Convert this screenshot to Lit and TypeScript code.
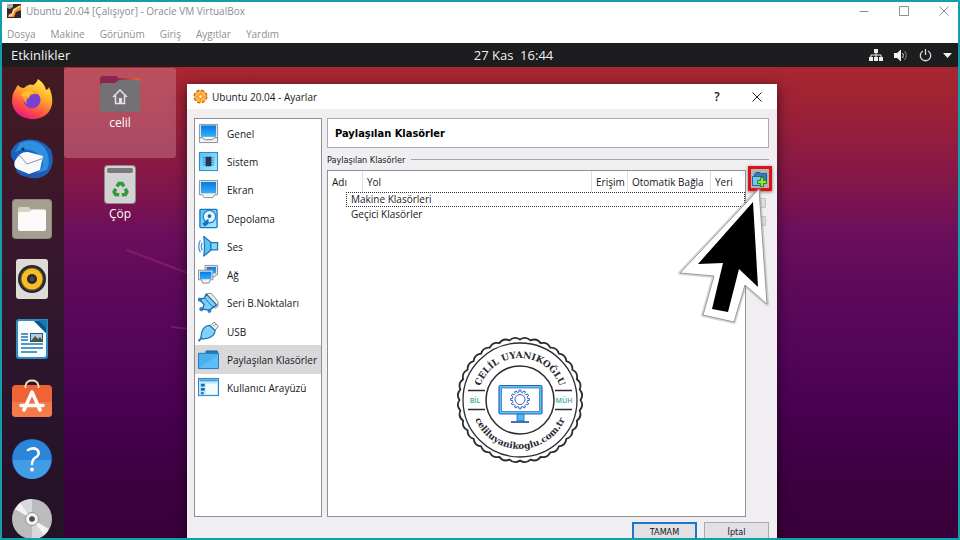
import { LitElement, html, svg, css } from "lit";
import { customElement } from "lit/decorators.js";
import { classMap } from "lit/directives/class-map.js";

const defs = svg`<defs>
  <linearGradient id="b" x1="0" y1="0" x2="0" y2="1"><stop offset="0" stop-color="#0a78e0"/><stop offset="1" stop-color="#35b0fa"/></linearGradient>
  <linearGradient id="c" x1="0" y1="0" x2="1" y2="1"><stop offset="0" stop-color="#4fc0f6"/><stop offset="1" stop-color="#a9ecff"/></linearGradient>
</defs>`;

const icon = (body: unknown) => html`<svg class="nav-icon" viewBox="0 0 22 22" aria-hidden="true">${defs}${body}</svg>`;

const navItems = [
  { label: "Genel", art: svg`<path d="M1.5 1.5H20.5V20.5H1.5Z" fill="#f4f4f4" stroke="#8a8d94"/><rect x="3" y="2.500" width="16" height="12" fill="url(#b)"/><path d="M1.500 15.500H5L7 17.500H15L17 15.500H20.500" fill="none" stroke="#777b82"/>` },
  { label: "Sistem", art: svg`<rect x="1.500" y="1.500" width="19" height="19" fill="url(#c)" stroke="#2c80c0"/><path d="M5 7h12M5 9.500h12M5 12h12M5 14.500h12" stroke="#2f8fcf"/><rect x="8" y="6" width="6" height="10" fill="#26354a"/>` },
  { label: "Ekran", art: svg`<path d="M1.500 1.500H20.500V16.500H17.500L15.500 19.500H6.500L4.500 16.500H1.500Z" fill="#f4f4f4" stroke="#858991"/><rect x="3" y="3" width="16" height="12" fill="url(#b)"/>` },
  { label: "Depolama", art: svg`<rect x="2" y="1.500" width="18" height="19" rx="1" fill="url(#c)" stroke="#1f78bd" stroke-width="1.400"/><circle cx="12" cy="9" r="6.500" fill="#e4f6ff" stroke="#2381c4" stroke-width="1.300"/><circle cx="12" cy="8.500" r="2" fill="#1768ad"/><path d="M11 11 4.500 16.500l2.500 3q4-2 4-5Z" fill="#1d72ba"/>` },
  { label: "Ses", art: svg`<path d="M6 .500 13.500 6.500v8.500L6 21Q7.500 11 6 .500Z" fill="#5cc2f6" stroke="#1f74b8" stroke-width="1.300" stroke-linejoin="round"/><path d="M13.500 7h7v7.500h-7Z" fill="#86d6fa" stroke="#1f74b8" stroke-width="1.300"/><path d="M4.500 7Q2.500 11 4.500 15M2.500 4.500Q-1 11 2.500 17" fill="none" stroke="#3c93d2" stroke-width="1.300"/>` },
  { label: "Ağ", art: svg`<path d="M7.500 1.500h13v10h-2l-1 2h-8l-2-2Z" fill="#f2f2f2" stroke="#878b92"/><rect x="9" y="3" width="10" height="7" fill="url(#b)"/><path d="M.500 6.500h15v10h-2.500l-1.500 3.500H5l-1.500-3.500h-3Z" fill="#f2f2f2" stroke="#858991"/><rect x="2" y="8" width="12" height="8" fill="url(#b)"/>` },
  { label: "Seri B.Noktaları", art: svg`<path d="M10 1.500h4L21 10v5l-3 2L8 6Z" fill="#eee" stroke="#888"/><path d="M8.500 2 19.500 13.500l-7.500 5.500-7.500-1L6.500 13 .800 7.500l6-1Z" fill="#7fd0f8" stroke="#1d6cac" stroke-width="1.400" stroke-linejoin="round"/><path d="M7 6.500 15.500 15.500" fill="none" stroke="#1d6cac"/><g fill="#2d8ad0" stroke="#1a5f9c" stroke-width=".6"><circle cx="2" cy="8" r="1.800"/><circle cx="3.500" cy="18" r="1.800"/><circle cx="12" cy="20" r="1.600"/></g>` },
  { label: "USB", art: svg`<path d="m13 5 4-4 4.500 4.500-4 4.500Z" fill="#f2f2f2" stroke="#7f838a"/><path d="M16 4.500l1 1M18 3l1 1" stroke="#555"/><path d="M12 4.500 18 10Q17 16 10.500 18L5 19 3 17 4 11.500Q6 5 12 4.500Z" fill="#7fd3f9" stroke="#2277ba" stroke-width="1.300"/><path d="m4 17.500-3.500 3.500" stroke="#2277ba" stroke-width="2"/>` },
  { label: "Paylaşılan Klasörler", art: svg`<path d="M8.500 5V2h11.500l1 3Z" fill="#2478bb" stroke="#1d68a8"/><path d="M.500 4.500H21.500V20.500H.500Z" fill="#4bb1ee" stroke="#2277b8"/><path d="M1 20 21 6v14Z" fill="#68c6f7" opacity=".6"/>` },
  { label: "Kullanıcı Arayüzü", art: svg`<rect x=".500" y="1.500" width="21" height="18" fill="#bfe9fb" stroke="#2b7db9"/><rect x="1.500" y="2.500" width="19" height="2" fill="#3c9ade"/><rect x="8" y="7" width="12" height="11" fill="#f2fbff"/><path d="M3 7h4v3H3zM3 11.500h4v3H3zM3 16h3v2H3z" fill="#1868b2"/>` },
];

const dockItems = [
  { label: "Firefox", art: svg`<defs><linearGradient id="f" x1=".8" y1="0" x2=".3" y2="1"><stop offset="0" stop-color="#fff04a"/><stop offset=".4" stop-color="#ffa92c"/><stop offset=".75" stop-color="#ff4a45"/><stop offset="1" stop-color="#e5178a"/></linearGradient></defs>
    <path d="M6 6Q8 9 12 9 17 4 21 6 24 5 26 0 33 5 34 11 37 10 37 8 44 24 36 34 29 41 18 40 3 38 0 24 0 14 3 11Q4 8 6 6Z" fill="url(#f)"/><circle cx="20" cy="21" r="8.500" fill="#7b3fd0"/><path d="M12 12Q21 8 27 16 19 13 17 19 13 20 15 25 8 20 12 12Z" fill="#ff9a25"/><path d="M14 12q6-3 8 3-5-1-5 3-5 0-8-1 1-4 5-5Z" fill="#ffbd32"/>` },
  { label: "Thunderbird", art: svg`<path d="M-1 12Q4 1 17 .500 31 0 39 11 44 24 36 34 27 42 15 38 2 33 2 22Q-2 18-1 12Z" fill="#1c62bd"/><path d="M8 4Q22-2 32 8 40 18 35 31 30 35 24 35 36 26 27 16 16 7 3 13Z" fill="#2f8fe0"/><path d="M3 22Q8 12 16 13L31 17 28 31 17 35 5 30Q1 27 3 22Z" fill="#f7f9fd"/><path d="m7 16 8 9 17-6" fill="none" stroke="#8796ae"/><path d="M3 30q9 7 20 5l14-5q-8 11-21 8Q6 37 3 30Z" fill="#2357b0"/><circle cx="11" cy="10" r="1.500" fill="#08284f"/>` },
  { label: "Dosyalar", art: svg`<rect width="40" height="40" rx="4" fill="#938b7f"/><rect x="1" y="1" width="38" height="38" rx="4" fill="#a69e90"/><path d="M6 10q0-2 2-2h8q2 0 2 2h14q2 0 2 2v5H6Z" fill="#d8d2c7"/><path d="M6 15q0-2 2-2h9l3-2h12q2 0 2 2v17q0 2-2 2H8q-2 0-2-2Z" fill="#fbfaf8"/>` },
  { label: "Rhythmbox", art: svg`<rect x="4" width="32" height="40" rx="3" fill="#dedbd4"/><circle cx="20" cy="20" r="14" fill="#252830"/><circle cx="20" cy="20" r="11.500" fill="#6b5a26"/><circle cx="20" cy="20" r="10.500" fill="#f6bd24"/><circle cx="20" cy="20" r="5" fill="#25262a"/><circle cx="20" cy="20" r="2.500" fill="#42454d"/>` },
  { label: "LibreOffice Writer", art: svg`<path d="M7 0h29v37q0 3-3 3H7q-3 0-3-3V3q0-3 3-3Z" fill="#2e8ec2"/><path d="M7 2h15l12 12v22q0 2-2 2H8q-2 0-2-2V3Z" fill="#f8fcff"/><path d="M22 2 34 14V2Z" fill="#0d5385"/><path d="m26 1 9 9V1Z" fill="#1879b5"/><path d="M9 15h7M9 18h7M9 21h7M9 25h22M9 29h22M9 33h16" stroke="#1b78b3" stroke-width="1.500"/><rect x="18.500" y="14.500" width="12" height="8" fill="#a4d2ec" stroke="#275779"/><path d="m19 22 4-5 3 3 2-2 3 4Z" fill="#59512e"/>` },
  { label: "Ubuntu Software", art: svg`<rect y="6" width="40" height="32" rx="4" fill="#ef6436"/><path d="M0 23h40v11q0 4-4 4H4q-4 0-4-4Z" fill="#f47c4b"/><path d="M13.500 9V6.500q1-5 6.500-5t6.500 5V9" fill="none" stroke="#f2dfb8" stroke-width="1.800"/><path d="m12 31 8-18 8 18M9 26.500h22" fill="none" stroke="#fff" stroke-width="3.500" stroke-linejoin="round" stroke-linecap="round"/>` },
  { label: "Yardım", art: svg`<circle cx="20" cy="20" r="20" fill="#2779cb"/><circle cx="20" cy="20" r="19" fill="#2b86da"/><path d="M1 21h38a19 19 0 0 1-38 0Z" fill="#3f9ce5"/><path d="M16 11q5-3 9-.5 3.500 3.500 0 7Q20 20 20 25" fill="none" stroke="#fff" stroke-width="2.500" stroke-linecap="round"/><circle cx="20" cy="30.500" r="2" fill="#fff"/>` },
  { label: "Disk", art: svg`<circle cx="20" cy="20" r="20" fill="#bcbcbf"/><path d="M20 20 5 7Q10 0 20 0ZM20 20l16 12q-5 8-16 8Z" fill="#d9d9dc"/><path d="M20 20 3 10 8 4ZM20 20l17 10-5 6Z" fill="#f3f3f5"/><circle cx="20" cy="20" r="6.500" fill="#f2f2f2" stroke="#929295"/><circle cx="20" cy="20" r="2.800" fill="#4a4a4e"/>` },
];

/* Scalloped rim of the badge. */
const rim = (() => {
  const n = 36;
  let d = "";
  for (let i = 0; i <= n; i++) {
    const a = (i / n) * Math.PI * 2;
    const m = ((i - 0.5) / n) * Math.PI * 2;
    const x = 64 + 60.5 * Math.cos(a), y = 64 + 60.5 * Math.sin(a);
    d += i === 0 ? `M${x} ${y}` : `Q${64 + 64.5 * Math.cos(m)} ${64 + 64.5 * Math.sin(m)} ${x} ${y}`;
  }
  return d + "Z";
})();

/* Toothed outline of the gear on the monitor. */
const gear = (() => {
  const n = 12;
  let d = "";
  for (let i = 0; i < n; i++) {
    for (const [o, r] of [[-0.5, 7.6], [-0.25, 7.6], [-0.2, 9.4], [0.2, 9.4], [0.25, 7.6]]) {
      const a = ((i + o) / n) * Math.PI * 2;
      d += `${d ? "L" : "M"}${64 + r * Math.cos(a)} ${63.5 + r * Math.sin(a)}`;
    }
  }
  return d + "Z";
})();

@customElement("settings-dialog")
export class SettingsDialog extends LitElement {
  static styles = css`
    :host { display: flex; flex-direction: column; background: #f0eef1; color: #16161c; font: 10px/14px "Open Sans", "Noto Sans", sans-serif; box-shadow: 0 3px 12px rgba(0, 0, 0, .6); }
    button { font: inherit; color: inherit; border: 0; background: none; padding: 0; }
    svg { display: block; }
    .title { display: flex; align-items: center; height: 25px; flex: none; background: #fff; padding: 0 7px 0 6px; }
    .title h1 { flex: 1; font: inherit; margin: 0 0 0 4px; }
    .title .gear { width: 15px; height: 15px; }
    .title .win { width: 26px; height: 24px; display: grid; place-items: center; }
    .title .help { font-weight: 600; font-size: 12px; margin-right: 14px; }
    .body { display: flex; gap: 5px; padding: 9px 8px 0 7px; }
    nav { box-sizing: border-box; width: 128px; flex: none; background: #fff; border: 1px solid #8f9097; height: 399px; }
    ul { list-style: none; margin: 0; padding: 0; display: grid; grid-template-rows: repeat(10, 1fr); height: 283px; }
    li { display: grid; }
    .item { display: flex; align-items: center; gap: 8px; padding-left: 3px; text-align: left; white-space: nowrap; }
    .item span { padding-top: 1px; }
    .on { background: #d8d7da; }
    .nav-icon { width: 21px; height: 21px; }
    .page { flex: 1; min-width: 0; display: flex; flex-direction: column; height: 399px; }
    h2 { box-sizing: border-box; margin: 0; height: 30px; flex: none; background: #fff; border: 1px solid #a9a9ae; padding: 1px 7px 0; font: bold 11px/28px "DejaVu Sans Condensed", "Open Sans", sans-serif; color: #000; }
    .group { display: flex; align-items: center; gap: 6px; height: 22px; flex: none; }
    .group h3 { margin: 0; font: 9px/14px "DejaVu Sans Condensed", "Open Sans", sans-serif; padding-top: 1px; }
    .group i { flex: 1; height: 1px; background: #a3a3a8; }
    .split { flex: 1; display: flex; gap: 2px; min-height: 0; }
    .list { position: relative; flex: 1; min-width: 0; background: #fff; border: 1px solid #8f9097; }
    table { width: 100%; border-collapse: collapse; table-layout: fixed; }
    th { font-weight: normal; text-align: left; height: 21px; padding: 0 0 0 4px; border-right: 1px solid #dfdfe2; white-space: nowrap; }
    th:last-child { border: 0; }
    .name { width: 30px; } .access { width: 31px; } .auto { width: 78px; } .at { width: 30px; }
    td { padding: 0; }
    .row { margin-left: 18px; padding-left: 5px; line-height: 15px; outline: 1px dotted transparent; outline-offset: -1px; }
    .focus { outline-color: #303036; }
    .tools { width: 21px; flex: none; display: flex; flex-direction: column; gap: 4px; align-items: flex-start; }
    .add { box-sizing: border-box; width: 24px; height: 25px; border: 3px solid #e01217; background: #b4b2b5; display: grid; place-items: center; margin-top: -4px; flex: none; box-shadow: 0 1px 3px #777; }
    .off { width: 14px; height: 14px; margin-left: 5px; opacity: .5; }
    .badge { position: absolute; left: 128px; bottom: 52px; width: 128px; height: 128px; }
    .cursor { position: absolute; right: 5px; top: 100px; width: 96px; height: 144px; }
    .buttons { display: flex; justify-content: flex-end; gap: 7px; padding: 5px 8px 0; }
    .push { box-sizing: border-box; width: 65px; height: 20px; background: #e2e0e3; border: 1px solid #aaa9ad; font: 9px/14px "DejaVu Sans Condensed", "Open Sans", sans-serif; }
    .main { border: 2px solid #1778d0; }
    .badge text { font-family: "DejaVu Serif", serif; font-weight: bold; fill: #2a2a30; }
    .badge .side { font-family: "Open Sans", sans-serif; font-weight: 600; fill: #33a99c; }
  `;

  render() {
    return html`
      <header class="title">
        <svg class="gear" viewBox="0 0 15 15" aria-hidden="true"><circle cx="7.500" cy="7.500" r="6" fill="#f49b25" stroke="#d0641a" stroke-width="2" stroke-dasharray="3 1.700"/><circle cx="7.500" cy="7.500" r="5.500" fill="#ffb640"/><circle cx="7.500" cy="7.500" r="2" fill="#fff3cd" stroke="#e08a2c"/><path d="M7.500 2.500v3M7.500 9.500v3M2.500 7.500h3M9.500 7.500h3" stroke="#f09a35"/></svg>
        <h1>Ubuntu 20.04 - Ayarlar</h1>
        <button class="win help" aria-label="Yardım">?</button>
        <button class="win" aria-label="Kapat"><svg width="10" height="10"><path d="M.500.500l9 9M9.500.500l-9 9" stroke="#222"/></svg></button>
      </header>
      <div class="body">
        <nav><ul>${navItems.map((n, i) => html`<li><button class=${classMap({ item: true, on: i === 8 })}>${icon(n.art)}<span>${n.label}</span></button></li>`)}</ul></nav>
        <section class="page">
          <h2>Paylaşılan Klasörler</h2>
          <div class="group"><h3>Paylaşılan Klasörler</h3><i></i></div>
          <div class="split">
            <div class="list">
              <table>
                <thead><tr><th class="name">Adı</th><th>Yol</th><th class="access">Erişim</th><th class="auto">Otomatik Bağla</th><th class="at">Yeri</th></tr></thead>
                <tbody>
                  <tr><td colspan="5"><div class="row focus">Makine Klasörleri</div></td></tr>
                  <tr><td colspan="5"><div class="row">Geçici Klasörler</div></td></tr>
                </tbody>
              </table>
              ${this.badge()}
            </div>
            <div class="tools">
              <button class="add" aria-label="Yeni paylaşılan klasör ekle"><svg width="16" height="16" viewBox="0 0 16 16"><path d="M2.500 3.500 4 1.500h4l1 1h5.500v10h-12Z" fill="#2a7fbf" stroke="#1b5f99"/><path d="M.500 5.500h11v9H.500Z" fill="#75c5ee" stroke="#1b6aa6"/><path d="M8.500 6.500h3v3h3v3h-3v3h-3v-3h-3v-3h3Z" fill="#9be33c" stroke="#2f8a1d"/></svg></button>
              <svg class="off" viewBox="0 0 14 14"><path d="M1.500 3.500h11v9h-11Z" fill="#ccc" stroke="#999"/></svg>
              <svg class="off" viewBox="0 0 14 14"><path d="M1.500 3.500h11v9h-11Z" fill="#ccc" stroke="#999"/></svg>
            </div>
          </div>
        </section>
      </div>
      <footer class="buttons"><button class="push main">TAMAM</button><button class="push">İptal</button></footer>
      <svg class="cursor" viewBox="0 0 96 144" aria-hidden="true">
        <path d="M83 5 91 120 69 101 58 138 27 131 38 92 4 89Z" fill="#fff" stroke="#8b8b90" stroke-opacity=".35" stroke-width="4" stroke-linejoin="round"/>
        <path d="M83 5 91 120 69 101 58 138 27 131 38 92 4 89Z" fill="#fff" stroke="#999"/>
        <path d="M77 18 82 103 63 85 52 128 36 125 47 79 22 80Z" fill="#000"/>
      </svg>`;
  }

  badge() {
    return html`<svg class="badge" viewBox="0 0 128 128" role="img">
      <path d=${rim} fill="#fff" stroke="#2c2c31" stroke-width="1.800"/>
      <circle cx="64" cy="64" r="57" fill="none" stroke="#2c2c31" stroke-width="1.300"/>
      <circle cx="64" cy="64" r="34" fill="none" stroke="#2c2c31" stroke-width="1.500"/>
      <path d="M12 54.500H29M12 73.500H29M99 54.500H116M99 73.500H116" stroke="#2c2c31" stroke-width="1.500"/>
      <path id="up" d="M22 64a42 42 0 0 1 84 0" fill="none"/>
      <path id="down" d="M15 64a49 49 0 0 0 98 0" fill="none"/>
      <text font-size="9" text-anchor="middle"><textPath href="#up" startOffset="50%">CELİL UYANIKOĞLU</textPath></text>
      <text font-size="9" text-anchor="middle"><textPath href="#down" startOffset="50%">celiluyanikoglu.com.tr</textPath></text>
      <text class="side" x="19" y="67" font-size="7" text-anchor="middle">BİL</text>
      <text class="side" x="108" y="67" font-size="7" text-anchor="middle">MÜH</text>
      <rect x="43" y="49.500" width="43" height="28.500" rx="1.500" fill="#55c4f4" stroke="#2d63b5" stroke-width="1.200"/>
      <rect x="45.500" y="52" width="38" height="23.500" fill="#fff" stroke="#3d76c4" stroke-width=".8"/>
      <path d="M61 78h7v7h-7Z" fill="#4bbcf0" stroke="#2d63b5" stroke-width=".8"/><path d="M55 86h18" stroke="#2d63b5" stroke-width="1.800"/>
      <path d=${gear} fill="#fff" stroke="#3563b4"/><circle cx="64" cy="63.500" r="5" fill="#fff" stroke="#3563b4"/>
    </svg>`;
  }
}

@customElement("app-root")
export class AppRoot extends LitElement {
  static styles = css`
    :host { box-sizing: border-box; display: flex; flex-direction: column; height: 100vh; overflow: hidden; border: 2px solid #149fa8; background: #fff; font: 10px/14px "Open Sans", "Noto Sans", sans-serif; }
    button { font: inherit; color: inherit; border: 0; background: none; padding: 0; }
    svg { display: block; }
    .titlebar { display: flex; align-items: center; height: 18px; flex: none; color: #8b8b90; padding: 0 9px 0 5px; }
    .titlebar h1 { flex: 1; font: inherit; margin: 0 0 0 5px; }
    .controls { display: flex; gap: 30px; }
    .menu { display: flex; align-items: center; gap: 15px; height: 23px; flex: none; padding: 4px 5px 0; box-sizing: border-box; color: #8f8f94; }
    .panel { display: grid; grid-template-columns: 1fr auto 1fr; align-items: center; height: 24px; flex: none; padding: 0 6px 0 9px; background: #1d1c1e; color: #f0f0f0; font: 13px/16px "Open Sans", sans-serif; }
    .panel .activities { justify-self: start; }
    .panel .clock { margin-left: 64px; white-space: nowrap; }
    .tray { justify-self: end; display: flex; align-items: center; gap: 11px; }
    .desktop { position: relative; flex: 1; min-height: 0; overflow: hidden; display: flex; background: linear-gradient(180deg, #a9272f 0%, #9a2038 11%, #7e154d 27%, #6c0f5c 35%, #5e0a5a 46%, #53055a 60%, #480050 74%, #3d0040 88%, #38003a 100%); }
    .dock { width: 60px; flex: none; display: flex; flex-direction: column; align-items: center; gap: 20px; padding: 12px 2px 0 0; background: linear-gradient(180deg, #431a22, #37172c 40%, #29152c 70%, #241226); }
    .dock button, .dock svg { width: 40px; height: 40px; flex: none; overflow: visible; }
    .icons { display: flex; flex-direction: column; width: 112px; padding-top: 1px; gap: 1px; color: #fff; font: 12px/16px "Open Sans", sans-serif; text-shadow: 1px 1px 1px #000; }
    .shortcut { display: flex; flex-direction: column; align-items: center; height: 90px; padding-top: 7px; border-radius: 3px; gap: 2px; }
    .shortcut svg { width: 40px; height: 38px; overflow: visible; }
    .picked { background: rgba(215, 150, 165, .38); }
    .trail { position: absolute; left: 120px; top: 180px; width: 70px; height: 90px; }
    settings-dialog { position: absolute; left: 185px; right: 181px; top: 17px; bottom: -12px; }
  `;

  render() {
    return html`
      <header class="titlebar">
        <svg width="14" height="14" viewBox="0 0 14 14" aria-hidden="true"><path d="M0 0h14v14H0Z" fill="#30262b"/><path d="M0 0h6v3L3 5 0 4Z" fill="#aaa"/><path d="M14 1v5L9 8l-2 5H1l1-3 3-1 1-4Z" fill="#f5922c"/><path d="M13 2 7 6 5 11 2 12" fill="none" stroke="#ffe29b" stroke-width="1.500"/></svg>
        <h1>Ubuntu 20.04 [Çalışıyor] - Oracle VM VirtualBox</h1>
        <div class="controls">
          <button aria-label="Küçült"><svg width="10" height="10"><path d="M.500 5.500h9" stroke="#8d8d92"/></svg></button>
          <button aria-label="Büyüt"><svg width="10" height="10"><path d="M.500.500h9v9h-9Z" fill="none" stroke="#8d8d92"/></svg></button>
          <button aria-label="Kapat"><svg width="10" height="10"><path d="M.500.500l9 9M9.500.500l-9 9" stroke="#8d8d92"/></svg></button>
        </div>
      </header>
      <nav class="menu">${["Dosya", "Makine", "Görünüm", "Giriş", "Aygıtlar", "Yardım"].map((m) => html`<button>${m}</button>`)}</nav>
      <div class="panel">
        <button class="activities">Etkinlikler</button>
        <button class="clock">27 Kas&nbsp; 16:44</button>
        <div class="tray">
          <svg width="14" height="13" viewBox="0 0 14 13"><path d="M5 0h4v4H5zM0 8h4v4H0zM5 8h4v4H5zM10 8h4v4h-4z" fill="#eee"/><path d="M7 3v5M2 8.500V6h10v2.500" fill="none" stroke="#eee"/></svg>
          <svg width="14" height="13" viewBox="0 0 14 13"><path d="M0 4h3l4-3.500v12L3 9H0Z" fill="#f2f2f2"/><path d="M8.500 4q2 2.500 0 5" fill="none" stroke="#ddd"/><path d="M10.500 2q3.500 4.500 0 9" fill="none" stroke="#888"/></svg>
          <svg width="13" height="13" viewBox="0 0 13 13"><path d="M4 2a5.200 5.200 0 1 0 5 0M6.500 0v6" fill="none" stroke="#ddd" stroke-width="1.300"/></svg>
          <svg width="9" height="5" viewBox="0 0 9 5"><path d="M0 0h9L4.500 5Z" fill="#f2f2f2"/></svg>
        </div>
      </div>
      <main class="desktop">
        <svg class="trail" viewBox="0 0 70 90" aria-hidden="true"><path d="M5 3 68 27M50 80l18 2" stroke="#9a246e" stroke-opacity=".6" stroke-width="2" stroke-linecap="round"/></svg>
        <div class="dock">${dockItems.map((d) => html`<button aria-label=${d.label}><svg viewBox="0 0 40 40">${d.art}</svg></button>`)}</div>
        <div class="icons">
          <button class="shortcut picked"><svg viewBox="0 0 40 38"><defs><linearGradient id="t"><stop offset=".4" stop-color="#8a2450"/><stop offset="1" stop-color="#f0642a"/></linearGradient></defs><path d="M0 4q0-3 3-3h13l3 2h19q2 0 2 2v10H0Z" fill="url(#t)"/><path d="M0 11q0-3 3-3h12l4-3h18q3 0 3 3v26q0 3-3 3H3q-3 0-3-3Z" fill="#747174"/><path d="m13 22 7-7 7 7M15.500 20.500v8h9v-8" fill="none" stroke="#e4e2e4" stroke-width="1.500"/><path d="M19 23h3v5h-3Z" fill="#e4e2e4"/></svg><span>celil</span></button>
          <button class="shortcut"><svg viewBox="0 0 40 38"><rect x="4" y="-1" width="32" height="39" rx="4" fill="#8c8c8e"/><rect x="5" width="30" height="37" rx="3" fill="#d3d2d4"/><rect x="7" y="2" width="26" height="5" rx="2" fill="#7b797c"/><g fill="none" stroke="#2f9a3a" stroke-width="3.500"><path d="M17 20.500 19 17.500h3l2 3"/><path d="M17 20.500 19 17.500h3l2 3" transform="rotate(120 20.500 24)"/><path d="M17 20.500 19 17.500h3l2 3" transform="rotate(240 20.500 24)"/></g></svg><span>Çöp</span></button>
        </div>
        <settings-dialog></settings-dialog>
      </main>`;
  }
}
